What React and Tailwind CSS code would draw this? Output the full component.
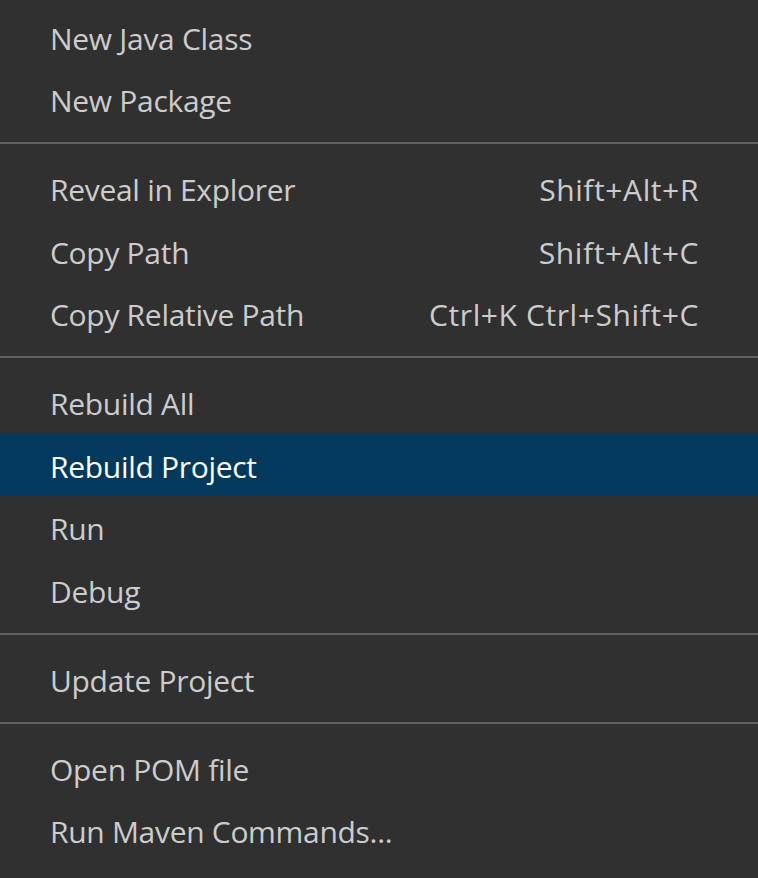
const groups = [
  [{ label: "New Java Class" }, { label: "New Package" }],
  [
    { label: "Reveal in Explorer", keys: "Shift+Alt+R" },
    { label: "Copy Path", keys: "Shift+Alt+C" },
    { label: "Copy Relative Path", keys: "Ctrl+K Ctrl+Shift+C" },
  ],
  [
    { label: "Rebuild All" },
    { label: "Rebuild Project", active: true },
    { label: "Run" },
    { label: "Debug" },
  ],
  [{ label: "Update Project" }],
  [{ label: "Open POM file" }, { label: "Run Maven Commands..." }],
];

function Item({ label, keys, active }) {
  return (
    <div
      className={
        "flex h-[62.5px] items-center justify-between pl-[50px] pr-[59px] pt-[4px] " +
        (active ? "bg-[#04395e] text-white" : "text-[#cccccc]")
      }
    >
      <span className="tracking-[-0.3px]">{label}</span>
      {keys && <span className="tracking-[0.6px]">{keys}</span>}
    </div>
  );
}

export default function App() {
  return (
    <div
      className="min-h-screen w-[758px] bg-[#303031] pt-[5px] text-[30px]"
      style={{ fontFamily: '"Open Sans", "Noto Sans", sans-serif' }}
    >
      {groups.map((g, i) => (
        <div key={i}>
          {i > 0 && (
            <div className="flex h-[26.5px] items-center">
              <div className="h-[2px] w-full bg-[#606060]" />
            </div>
          )}
          {g.map((it) => (
            <Item key={it.label} {...it} />
          ))}
        </div>
      ))}
    </div>
  );
}
